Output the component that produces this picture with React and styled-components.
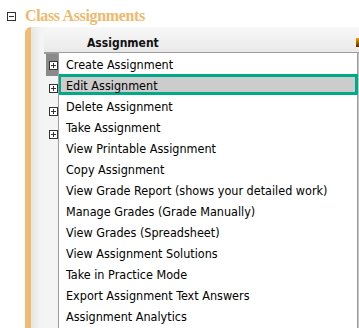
import React from 'react'
import styled, { createGlobalStyle } from 'styled-components'

const GlobalStyle = createGlobalStyle`
  html, body {
    margin: 0;
    padding: 0;
    background: #ffffff;
    overflow: hidden;
  }
`

const Page = styled.div`
  position: relative;
  width: 359px;
  height: 328px;
  overflow: hidden;
  font-family: "DejaVu Sans Condensed", "DejaVu Sans", sans-serif;
`

const TitleRow = styled.div`
  display: flex;
  align-items: center;
  gap: 9px;
  height: 27px;
  padding-left: 7px;
  padding-top: 5px;
  box-sizing: border-box;
`

const BoxIcon = styled.span`
  display: inline-flex;
  width: 9px;
  height: 9px;
  flex: none;
`

const Title = styled.h2`
  margin: 0;
  font-family: "Liberation Serif", serif;
  font-weight: bold;
  font-size: 16px;
  letter-spacing: -0.35px;
  color: #f0b96c;
  line-height: 20px;
`

const Panel = styled.div`
  margin-left: 25px;
  height: 301px;
  border-left: 6px solid #f0bc74;
  border-top-left-radius: 6px;
  background: linear-gradient(to right, #e6e6e6 0px, #f4f4f4 10px, #f6f6f6 100%);
  padding-left: 15px;
  display: flex;
  flex-direction: column;
`

const HeaderBar = styled.div`
  height: 27px;
  box-sizing: border-box;
  margin-left: -2px;
  border-top-left-radius: 6px;
  background: linear-gradient(to bottom, #f8f8f8, #e9e9e9);
  border-bottom: 2px solid #9a9a9a;
  display: flex;
  align-items: flex-end;
  padding-left: 43px;
`

const HeaderLabel = styled.span`
  font-family: "DejaVu Sans Condensed", "DejaVu Sans", sans-serif;
  font-weight: bold;
  font-size: 12px;
  color: #111;
  line-height: 17px;
`

const Rows = styled.div`
  display: flex;
  flex-direction: column;
`

const Row = styled.div`
  height: 22px;
  margin-bottom: 1px;
  width: 12px;
  display: flex;
  align-items: center;
  justify-content: flex-end;
  background: ${({ $active }) => ($active ? '#8a8a8a' : 'transparent')};
`

const Menu = styled.ul`
  position: absolute;
  left: 58px;
  top: 52px;
  width: 298px;
  margin: 0;
  padding: 0 0 4px;
  list-style: none;
  background: #ffffff;
  border: 1px solid #9d9d9d;
  box-shadow: 1px 1px 0 #c4c4c4;
`

const Item = styled.li`
  height: 21px;
  line-height: 17px;
  padding-left: 5px;
  font-family: "DejaVu Sans Condensed", "DejaVu Sans", sans-serif;
  font-size: 12.5px;
  color: #000;
  white-space: nowrap;
  box-sizing: border-box;
  border: 3px solid ${({ $selected }) => ($selected ? '#00aa86' : 'transparent')};
  border-left-width: 2px;
  background: ${({ $selected }) => ($selected ? '#cccccc' : 'transparent')};
  margin-right: -1px;
`

const SortMark = styled.span`
  position: absolute;
  left: 356px;
  top: 38px;
  width: 3px;
  height: 9px;
  background: linear-gradient(to bottom, #f6a000, #5a2a00);
`

const ToggleIcon = ({ plus }) => (
  <BoxIcon>
    <svg width="9" height="9" viewBox="0 0 9 9">
      <rect x="0.5" y="0.5" width="8" height="8" fill="#fff" stroke="#333" />
      <line x1="2" y1="4.5" x2="7" y2="4.5" stroke="#333" />
      {plus && <line x1="4.5" y1="2" x2="4.5" y2="7" stroke="#333" />}
    </svg>
  </BoxIcon>
)

const items = [
  'Create Assignment',
  'Edit Assignment',
  'Delete Assignment',
  'Take Assignment',
  'View Printable Assignment',
  'Copy Assignment',
  'View Grade Report (shows your detailed work)',
  'Manage Grades (Grade Manually)',
  'View Grades (Spreadsheet)',
  'View Assignment Solutions',
  'Take in Practice Mode',
  'Export Assignment Text Answers',
  'Assignment Analytics',
]

export default function App() {
  return (
    <Page>
      <GlobalStyle />
      <TitleRow>
        <ToggleIcon />
        <Title>Class Assignments</Title>
      </TitleRow>
      <Panel>
        <HeaderBar>
          <HeaderLabel>Assignment</HeaderLabel>
        </HeaderBar>
        <Rows>
          {[0, 1, 2, 3].map((i) => (
            <Row key={i} $active={i === 0}>
              <ToggleIcon plus />
            </Row>
          ))}
        </Rows>
      </Panel>
      <SortMark />
      <Menu>
        {items.map((label, i) => (
          <Item key={label} $selected={i === 1}>
            {label}
          </Item>
        ))}
      </Menu>
    </Page>
  )
}
